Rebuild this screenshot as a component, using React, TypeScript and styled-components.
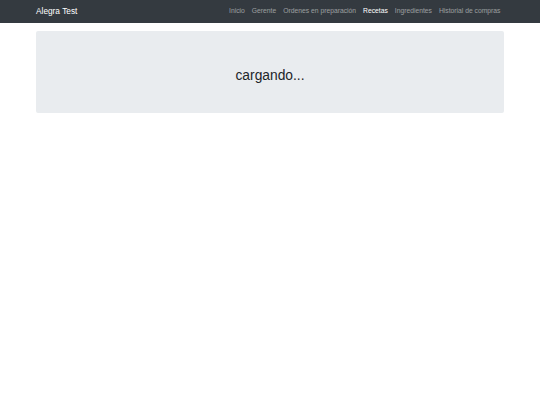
import React from "react";
import styled, { createGlobalStyle } from "styled-components";

const GlobalStyle = createGlobalStyle`
  html, body { margin: 0; padding: 0; background: #fff; }
  body { font-family: "Liberation Sans", Arial, sans-serif; color: #212529; }
  * { box-sizing: border-box; }
`;

const NavBar = styled.nav`
  background: #343a40;
  height: 23px;
  display: flex;
  align-items: center;
`;

const NavContainer = styled.div`
  width: 468px;
  margin: 0 auto;
  display: flex;
  align-items: center;
  justify-content: space-between;
`;

const Brand = styled.a`
  color: #fff;
  font-size: 8.3px;
  line-height: 1.2;
  text-decoration: none;
`;

const NavList = styled.ul`
  list-style: none;
  margin: 0;
  padding: 0;
  display: flex;
  align-items: center;
`;

const NavLink = styled.a<{ $active?: boolean }>`
  display: block;
  padding: 0 3.5px;
  font-size: 6.75px;
  line-height: 1.2;
  color: ${(p) => (p.$active ? "#fff" : "rgba(255,255,255,0.5)")};
  text-decoration: none;
`;

const Main = styled.main`
  width: 468px;
  margin: 8px auto 0;
`;

const Jumbotron = styled.section`
  background: #e9ecef;
  border-radius: 2px;
  padding: 37px 16px 28px;
  text-align: center;
`;

const Heading = styled.h2`
  margin: 0;
  font-size: 13.8px;
  font-weight: 400;
  line-height: 1.2;
  color: #212529;
`;

const links = [
  "Inicio",
  "Gerente",
  "Ordenes en preparación",
  "Recetas",
  "Ingredientes",
  "Historial de compras",
];

export default function App() {
  return (
    <>
      <GlobalStyle />
      <NavBar>
        <NavContainer>
          <Brand href="#">Alegra Test</Brand>
          <NavList>
            {links.map((l) => (
              <li key={l}>
                <NavLink href="#" $active={l === "Recetas"}>
                  {l}
                </NavLink>
              </li>
            ))}
          </NavList>
        </NavContainer>
      </NavBar>
      <Main>
        <Jumbotron>
          <Heading>cargando...</Heading>
        </Jumbotron>
      </Main>
    </>
  );
}
